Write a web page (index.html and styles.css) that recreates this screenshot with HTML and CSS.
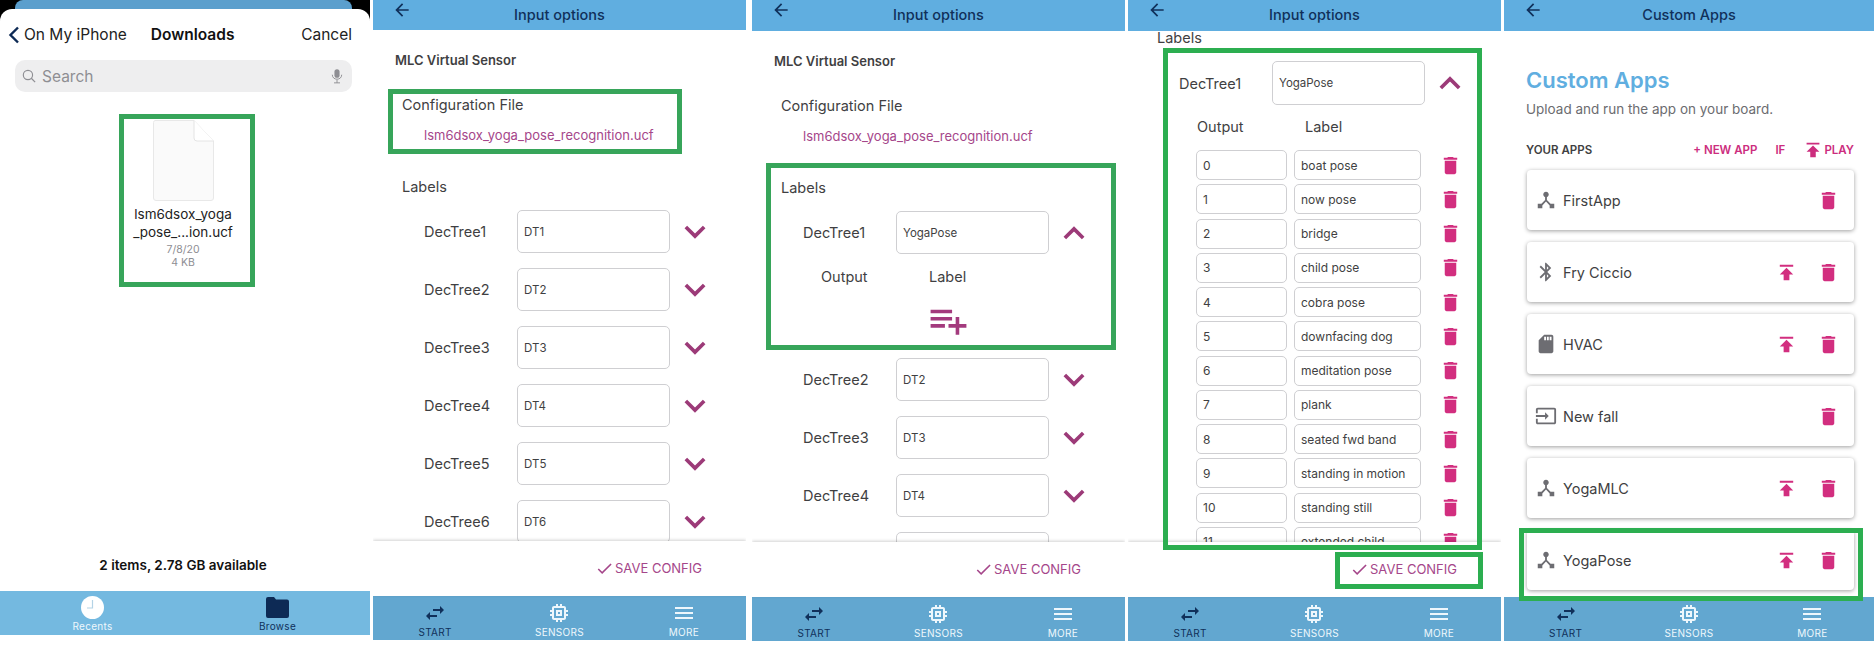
FILE: index.html
```html
<!DOCTYPE html>
<html lang="en">
<head>
  <meta charset="UTF-8" />
  <title>Custom Apps</title>
  <link rel="stylesheet" href="styles.css">
</head>
<body>
  <svg class="sprite" xmlns="http://www.w3.org/2000/svg">
    <symbol id="i-back" viewBox="0 0 24 24"><path d="M20 11H7.83l5.59-5.59L12 4l-8 8 8 8 1.41-1.41L7.83 13H20v-2z"/></symbol>
    <symbol id="i-down" viewBox="0 0 24 24"><path d="M2 6.5L12 16.5 22 6.5" fill="none" stroke="currentColor" stroke-width="4"/></symbol>
    <symbol id="i-up" viewBox="0 0 24 24"><path d="M2 17.5L12 7.5 22 17.5" fill="none" stroke="currentColor" stroke-width="4"/></symbol>
    <symbol id="i-trash" viewBox="0 0 24 24"><path d="M6 19c0 1.1.9 2 2 2h8c1.1 0 2-.9 2-2V7H6v12zM19 4h-3.5l-1-1h-5l-1 1H5v2h14V4z"/></symbol>
    <symbol id="i-publish" viewBox="0 0 24 24"><path d="M5 4v2h14V4H5zm0 10h4v6h6v-6h4l-7-7-7 7z"/></symbol>
    <symbol id="i-add" viewBox="0 0 24 24"><path d="M14 10H2v2h12v-2zm0-4H2v2h12V6zm4 8v-4h-2v4h-4v2h4v4h2v-4h4v-2h-4zM2 16h8v-2H2v2z"/></symbol>
    <symbol id="i-swap" viewBox="0 0 24 24"><path d="M6.99 11L3 15l3.99 4v-3H14v-2H6.99v-3zM21 9l-3.99-4v3H10v2h7.01v3L21 9z"/></symbol>
    <symbol id="i-chip" viewBox="0 0 24 24"><path d="M15 9H9v6h6V9zm-2 4h-2v-2h2v2zm8-2V9h-2V7c0-1.1-.9-2-2-2h-2V3h-2v2h-2V3H9v2H7c-1.1 0-2 .9-2 2v2H3v2h2v2H3v2h2v2c0 1.1.9 2 2 2h2v2h2v-2h2v2h2v-2h2c1.1 0 2-.9 2-2v-2h2v-2h-2v-2h2zm-4 6H7V7h10v10z"/></symbol>
    <symbol id="i-menu" viewBox="0 0 24 24"><path d="M3 18h18v-2H3v2zm0-5h18v-2H3v2zm0-7v2h18V6H3z"/></symbol>
    <symbol id="i-check" viewBox="0 0 24 24"><path d="M9 16.17L4.83 12l-1.42 1.41L9 19 21 7l-1.41-1.41z"/></symbol>
    <symbol id="i-bluetooth" viewBox="0 0 24 24"><path d="M17.71 7.71L12 2h-1v7.59L6.41 5 5 6.41 10.59 12 5 17.59 6.41 19 11 14.41V22h1l5.71-5.71-4.3-4.29 4.3-4.29zM13 5.83l1.88 1.88L13 9.59V5.83zm1.88 10.46L13 18.17v-3.76l1.88 1.88z"/></symbol>
    <symbol id="i-sd" viewBox="0 0 24 24"><path d="M18 2h-8L4.02 8 4 20c0 1.1.9 2 2 2h12c1.1 0 2-.9 2-2V4c0-1.1-.9-2-2-2zm-6 6h-2V4h2v4zm3 0h-2V4h2v4zm3 0h-2V4h2v4z"/></symbol>
    <symbol id="i-input" viewBox="0 0 24 24"><path d="M21 3.01H3c-1.1 0-2 .9-2 2V9h2V4.99h18v14.03H3V15H1v4.01c0 1.1.9 1.98 2 1.98h18c1.1 0 2-.88 2-1.98v-14c0-1.1-.9-2-2-2zM11 16l4-4-4-4v3H1v2h10v3z"/></symbol>
    <symbol id="i-hub" viewBox="0 0 24 24"><path d="M17 16l-4-4V8.82C14.16 8.4 15 7.3 15 6c0-1.66-1.34-3-3-3S9 4.34 9 6c0 1.3.84 2.4 2 2.82V12l-4 4H3v5h5v-3.05l4-4.2 4 4.2V21h5v-5h-4z"/></symbol>
  </svg>

  <div class="strip">

    <!-- file picker -->
    <section class="panel panel-files">
      <div class="notch"><div class="notch-blue"></div></div>
      <div class="sheet">
        <div class="picker-nav">
          <svg class="picker-chevron" viewBox="0 0 12 18"><path d="M10 1.5L2.5 9l7.5 7.5" fill="none" stroke="currentColor" stroke-width="2.4"/></svg>
          <span class="picker-back">On My iPhone</span>
          <span class="picker-title">Downloads</span>
          <span class="picker-cancel">Cancel</span>
        </div>
        <div class="search">
          <svg class="search-icon" viewBox="0 0 16 16"><circle cx="6.8" cy="6.8" r="5.3" fill="none" stroke="currentColor" stroke-width="1.3"/><path d="M10.6 10.6L15 15" stroke="currentColor" stroke-width="1.4"/></svg>
          <span class="search-text">Search</span>
          <svg class="search-mic" viewBox="0 0 14 18"><rect x="4" y="1" width="6" height="10" rx="3" fill="currentColor"/><path d="M1.5 7.5c0 7 11 7 11 0M7 13.5V17M3.5 17h7" fill="none" stroke="currentColor" stroke-width="1.1"/></svg>
        </div>
        <div class="file">
          <svg class="file-icon" viewBox="0 0 61 81"><path d="M2 .5h39L60.5 21v57a2.500 2.500 0 0 1-2.500 2.500H3A2.500 2.500 0 0 1 .5 78V2.500A2 2 0 0 1 2 .5z" fill="#fafafa" stroke="#e8e8e8"/><path d="M41 .5V18a3 3 0 0 0 3 3h16.500" fill="#fff" stroke="#e4e4e4"/></svg>
          <div class="file-name">lsm6dsox_yoga<br>_pose_...ion.ucf</div>
          <div class="file-meta">7/8/20<br>4 KB</div>
        </div>
      </div>
      <div class="status">2 items, 2.78 GB available</div>
      <nav class="tabs tabs-files">
        <div class="tab tab-white">
          <svg class="tab-clock" viewBox="0 0 23 23"><circle cx="11.500" cy="11.500" r="11.500" fill="#fff"/><path d="M11.500 4v8H6" fill="none" stroke="#b4d3e6" stroke-width="1.200"/></svg>
          <span>Recents</span>
        </div>
        <div class="tab tab-navy">
          <svg class="tab-folder" viewBox="0 0 23 21"><path d="M0 2a2 2 0 0 1 2-2h6l2 2.500h11a2 2 0 0 1 2 2V19a2 2 0 0 1-2 2H2a2 2 0 0 1-2-2z" fill="#0d2a55"/></svg>
          <span>Browse</span>
        </div>
      </nav>
      <div class="mark mark-file"></div>
    </section>

    <!-- input options, collapsed -->
    <section class="panel panel-input">
      <header class="top"><svg class="top-back"><use href="#i-back"/></svg><h2>Input options</h2></header>
      <div class="content">
        <div class="sensor">MLC Virtual Sensor</div>
        <div class="section-label cfg-label">Configuration File</div>
        <div class="cfg-file">lsm6dsox_yoga_pose_recognition.ucf</div>
        <div class="section-label labels-label">Labels</div>
        <div class="trees">
          <div class="tree"><span>DecTree1</span><div class="field">DT1</div><svg class="chev"><use href="#i-down"/></svg></div>
          <div class="tree"><span>DecTree2</span><div class="field">DT2</div><svg class="chev"><use href="#i-down"/></svg></div>
          <div class="tree"><span>DecTree3</span><div class="field">DT3</div><svg class="chev"><use href="#i-down"/></svg></div>
          <div class="tree"><span>DecTree4</span><div class="field">DT4</div><svg class="chev"><use href="#i-down"/></svg></div>
          <div class="tree"><span>DecTree5</span><div class="field">DT5</div><svg class="chev"><use href="#i-down"/></svg></div>
          <div class="tree"><span>DecTree6</span><div class="field">DT6</div><svg class="chev"><use href="#i-down"/></svg></div>
        </div>
      </div>
      <div class="save"><svg><use href="#i-check"/></svg>SAVE CONFIG</div>
      <nav class="tabs">
        <div class="tab tab-navy"><svg><use href="#i-swap"/></svg><span>START</span></div>
        <div class="tab tab-white"><svg><use href="#i-chip"/></svg><span>SENSORS</span></div>
        <div class="tab tab-white"><svg><use href="#i-menu"/></svg><span>MORE</span></div>
      </nav>
      <div class="mark mark-cfg"></div>
    </section>

    <!-- input options, first tree open and empty -->
    <section class="panel panel-input panel-low">
      <header class="top"><svg class="top-back"><use href="#i-back"/></svg><h2>Input options</h2></header>
      <div class="content">
        <div class="sensor">MLC Virtual Sensor</div>
        <div class="section-label cfg-label">Configuration File</div>
        <div class="cfg-file">lsm6dsox_yoga_pose_recognition.ucf</div>
        <div class="section-label labels-label">Labels</div>
        <div class="trees">
          <div class="tree"><span>DecTree1</span><div class="field">YogaPose</div><svg class="chev"><use href="#i-up"/></svg></div>
          <div class="detail">
            <div class="detail-head"><span>Output</span><span>Label</span></div>
            <svg class="detail-add"><use href="#i-add"/></svg>
          </div>
          <div class="tree"><span>DecTree2</span><div class="field">DT2</div><svg class="chev"><use href="#i-down"/></svg></div>
          <div class="tree"><span>DecTree3</span><div class="field">DT3</div><svg class="chev"><use href="#i-down"/></svg></div>
          <div class="tree"><span>DecTree4</span><div class="field">DT4</div><svg class="chev"><use href="#i-down"/></svg></div>
          <div class="tree"><span></span><div class="field"></div></div>
        </div>
      </div>
      <div class="save"><svg><use href="#i-check"/></svg>SAVE CONFIG</div>
      <nav class="tabs">
        <div class="tab tab-navy"><svg><use href="#i-swap"/></svg><span>START</span></div>
        <div class="tab tab-white"><svg><use href="#i-chip"/></svg><span>SENSORS</span></div>
        <div class="tab tab-white"><svg><use href="#i-menu"/></svg><span>MORE</span></div>
      </nav>
      <div class="mark mark-labels"></div>
    </section>

    <!-- input options, first tree filled in -->
    <section class="panel panel-input panel-low">
      <header class="top"><svg class="top-back"><use href="#i-back"/></svg><h2>Input options</h2></header>
      <div class="content">
        <div class="section-label scrolled-label">Labels</div>
        <div class="tree tree-open"><span>DecTree1</span><div class="field">YogaPose</div><svg class="chev"><use href="#i-up"/></svg></div>
        <div class="detail-head detail-head-filled"><span>Output</span><span>Label</span></div>
        <div class="outputs">
          <div class="output"><div class="field">0</div><div class="field">boat pose</div><svg class="bin"><use href="#i-trash"/></svg></div>
          <div class="output"><div class="field">1</div><div class="field">now pose</div><svg class="bin"><use href="#i-trash"/></svg></div>
          <div class="output"><div class="field">2</div><div class="field">bridge</div><svg class="bin"><use href="#i-trash"/></svg></div>
          <div class="output"><div class="field">3</div><div class="field">child pose</div><svg class="bin"><use href="#i-trash"/></svg></div>
          <div class="output"><div class="field">4</div><div class="field">cobra pose</div><svg class="bin"><use href="#i-trash"/></svg></div>
          <div class="output"><div class="field">5</div><div class="field">downfacing dog</div><svg class="bin"><use href="#i-trash"/></svg></div>
          <div class="output"><div class="field">6</div><div class="field">meditation pose</div><svg class="bin"><use href="#i-trash"/></svg></div>
          <div class="output"><div class="field">7</div><div class="field">plank</div><svg class="bin"><use href="#i-trash"/></svg></div>
          <div class="output"><div class="field">8</div><div class="field">seated fwd band</div><svg class="bin"><use href="#i-trash"/></svg></div>
          <div class="output"><div class="field">9</div><div class="field">standing in motion</div><svg class="bin"><use href="#i-trash"/></svg></div>
          <div class="output"><div class="field">10</div><div class="field">standing still</div><svg class="bin"><use href="#i-trash"/></svg></div>
          <div class="output"><div class="field">11</div><div class="field">extended child</div><svg class="bin"><use href="#i-trash"/></svg></div>
        </div>
      </div>
      <div class="save"><svg><use href="#i-check"/></svg>SAVE CONFIG</div>
      <nav class="tabs">
        <div class="tab tab-navy"><svg><use href="#i-swap"/></svg><span>START</span></div>
        <div class="tab tab-white"><svg><use href="#i-chip"/></svg><span>SENSORS</span></div>
        <div class="tab tab-white"><svg><use href="#i-menu"/></svg><span>MORE</span></div>
      </nav>
      <div class="mark mark-outputs"></div>
      <div class="mark mark-save"></div>
    </section>

    <!-- custom apps -->
    <section class="panel panel-apps panel-low">
      <header class="top"><svg class="top-back"><use href="#i-back"/></svg><h2>Custom Apps</h2></header>
      <div class="content">
        <h1 class="apps-title">Custom Apps</h1>
        <p class="apps-sub">Upload and run the app on your board.</p>
        <div class="apps-head">
          <span class="apps-your">YOUR APPS</span>
          <span class="apps-new">+ NEW APP</span>
          <span class="apps-if">IF</span>
          <span class="apps-play"><svg><use href="#i-publish"/></svg>PLAY</span>
        </div>
        <div class="cards">
          <div class="card"><svg class="card-icon"><use href="#i-hub"/></svg><span class="card-name">FirstApp</span><svg class="bin"><use href="#i-trash"/></svg></div>
          <div class="card"><svg class="card-icon"><use href="#i-bluetooth"/></svg><span class="card-name">Fry Ciccio</span><svg class="send"><use href="#i-publish"/></svg><svg class="bin"><use href="#i-trash"/></svg></div>
          <div class="card"><svg class="card-icon"><use href="#i-sd"/></svg><span class="card-name">HVAC</span><svg class="send"><use href="#i-publish"/></svg><svg class="bin"><use href="#i-trash"/></svg></div>
          <div class="card"><svg class="card-icon"><use href="#i-input"/></svg><span class="card-name">New fall</span><svg class="bin"><use href="#i-trash"/></svg></div>
          <div class="card"><svg class="card-icon"><use href="#i-hub"/></svg><span class="card-name">YogaMLC</span><svg class="send"><use href="#i-publish"/></svg><svg class="bin"><use href="#i-trash"/></svg></div>
          <div class="card"><svg class="card-icon"><use href="#i-hub"/></svg><span class="card-name">YogaPose</span><svg class="send"><use href="#i-publish"/></svg><svg class="bin"><use href="#i-trash"/></svg></div>
        </div>
      </div>
      <nav class="tabs">
        <div class="tab tab-navy"><svg><use href="#i-swap"/></svg><span>START</span></div>
        <div class="tab tab-white"><svg><use href="#i-chip"/></svg><span>SENSORS</span></div>
        <div class="tab tab-white"><svg><use href="#i-menu"/></svg><span>MORE</span></div>
      </nav>
      <div class="mark mark-app"></div>
    </section>

  </div>
</body>
</html>
```

FILE: styles.css
```css
* {
  box-sizing: border-box;
}

body {
  margin: 0;
  background-color: #fff;
  font-family: Inter, "Liberation Sans", sans-serif;
  color: #3f3f42;
  overflow: hidden;
}

.sprite {
  display: none;
}

.strip {
  display: flex;
  width: 1874px;
  height: 645px;
}

.panel {
  position: relative;
  display: flex;
  flex-direction: column;
  flex: none;
  width: 373px;
  height: 645px;
  padding-bottom: 5px;
  overflow: hidden;
}

.panel-low {
  padding-bottom: 4px;
}

.panel-low .top {
  height: 31px;
}

.panel-input + .panel-input {
  margin-left: 6px;
}

.panel-input + .panel-input + .panel-input {
  margin-left: 3px;
}

/* annotation frames */
.mark {
  position: absolute;
  border: 5px solid #37a55a;
  z-index: 5;
}

.mark-file { left: 119px; top: 114px; width: 136px; height: 173px; }
.mark-cfg { left: 15px; top: 89px; width: 294px; height: 65px; }
.mark-labels { left: 14px; top: 163px; width: 350px; height: 187px; }
.mark-outputs { left: 35px; top: 48px; width: 319px; height: 502px; border-color: #2cae50; }
.mark-save { left: 207px; top: 552px; width: 148px; height: 37px; border-color: #2cae50; }
.mark-app { left: 15px; top: 528px; width: 344px; height: 73px; border-color: #2cae50; }

/* file picker */
.panel-files {
  width: 370px;
  margin-right: 3px;
  padding-bottom: 10px;
}

.notch {
  height: 22px;
  background-color: #000;
  padding: 0 18px 0 15px;
  flex: none;
}

.notch-blue {
  height: 22px;
  background-color: #5b9fcd;
  border-radius: 8px 8px 0 0;
}

.sheet {
  flex: 1;
  margin-top: -13px;
  position: relative;
  background-color: #fff;
  border-radius: 12px 12px 0 0;
  display: flex;
  flex-direction: column;
}

.picker-nav {
  display: flex;
  align-items: center;
  height: 51px;
  padding: 0 18px 0 8px;
  font-size: 15.5px;
  color: #222;
}

.picker-chevron {
  width: 12px;
  height: 18px;
  color: #0d2a55;
  margin-right: 4px;
}

.picker-title {
  margin-left: 24px;
  font-weight: 600;
  color: #111;
}

.picker-cancel {
  margin-left: auto;
}

.search {
  display: flex;
  align-items: center;
  height: 32px;
  margin: 0 18px 0 15px;
  padding: 0 9px 0 7px;
  background-color: #eeeeef;
  border-radius: 10px;
  color: #8e8e93;
  font-size: 15.5px;
}

.search-icon {
  width: 14px;
  height: 14px;
  margin-right: 6px;
}

.search-mic {
  width: 12px;
  height: 16px;
  margin-left: auto;
}

.file {
  width: 366px;
  display: flex;
  flex-direction: column;
  align-items: center;
  padding-top: 28px;
}

.file-icon {
  width: 61px;
  height: 81px;
}

.file-name {
  margin-top: 4px;
  font-size: 13.5px;
  line-height: 18px;
  text-align: center;
  color: #222;
}

.file-meta {
  margin-top: 2px;
  font-size: 10.5px;
  line-height: 13px;
  text-align: center;
  color: #8e8e93;
}

.status {
  height: 52px;
  width: 366px;
  padding-top: 17px;
  flex: none;
  font-size: 13.5px;
  line-height: 18px;
  font-weight: 600;
  text-align: center;
  color: #111;
}

/* header */
.top {
  position: relative;
  display: flex;
  align-items: center;
  justify-content: center;
  height: 30px;
  flex: none;
  background-color: #60aee0;
  color: #10305a;
  z-index: 2;
}

.top h2 {
  margin: 0 0 2px;
  font-size: 14.5px;
  font-weight: 500;
}

.top-back {
  position: absolute;
  left: 19px;
  top: 0;
  width: 20px;
  height: 20px;
  fill: #10305a;
}

/* tab bar */
.tabs {
  display: grid;
  grid-template-columns: 1fr 1fr 1fr;
  height: 44px;
  flex: none;
  background-color: #62a7d0;
}

.tabs-files {
  grid-template-columns: 1fr 1fr;
  background-color: #74b9e0;
}

.tab {
  display: flex;
  flex-direction: column;
  align-items: center;
  padding-top: 5px;
  font-size: 10px;
  letter-spacing: 0.3px;
}

.tab svg {
  width: 24px;
  height: 24px;
  fill: currentColor;
}

.tab span {
  margin-top: 1px;
  line-height: 13px;
}

.tab-white {
  color: #eef7fc;
}

.tab-navy {
  color: #10305a;
}

.tab .tab-clock {
  width: 23px;
  height: 23px;
  margin-top: 0;
}

.tab .tab-folder {
  width: 23px;
  height: 21px;
  margin: 1px 0 1px;
}

/* input options */
.content {
  flex: 1;
  min-height: 0;
  overflow: hidden;
}

.sensor {
  height: 20px;
  margin: 20px 0 0 22px;
  font-size: 13px;
  line-height: 20px;
  font-weight: 600;
}

.section-label {
  height: 20px;
  margin-left: 29px;
  font-size: 14.5px;
  line-height: 20px;
}

.cfg-label {
  margin-top: 25px;
}

.cfg-file {
  height: 20px;
  margin: 10px 0 0 51px;
  font-size: 13px;
  line-height: 20px;
  color: #a5468a;
}

.labels-label {
  margin-top: 32px;
}

.scrolled-label {
  margin-top: -3px;
}

.trees {
  display: flex;
  flex-direction: column;
  gap: 15px;
  margin-top: 13px;
}

.tree {
  display: grid;
  grid-template-columns: 93px 153px 50px;
  align-items: center;
  height: 43px;
  flex: none;
  padding-left: 51px;
  font-size: 14.5px;
}

.tree-open {
  height: 44px;
  margin-top: 13px;
}

.field {
  display: flex;
  align-items: center;
  height: 100%;
  padding-left: 6px;
  border: 1px solid #cfcfd2;
  border-radius: 5px;
  background-color: #fff;
  font-size: 11.5px;
}

.chev {
  justify-self: center;
  width: 22px;
  height: 22px;
  color: #9c3a78;
}

.detail {
  height: 74px;
  flex: none;
}

.detail-head {
  display: grid;
  grid-template-columns: 108px 100px;
  height: 16px;
  padding-left: 69px;
  font-size: 14.5px;
  line-height: 16px;
}

.detail-head-filled {
  margin-top: 14px;
  grid-template-columns: 108px 100px;
}

.detail-add {
  display: block;
  width: 43px;
  height: 43px;
  margin: 14px 0 0 175px;
  fill: #a33a7d;
}

.outputs {
  display: flex;
  flex-direction: column;
  gap: 4.25px;
  margin-top: 15px;
}

.output {
  display: grid;
  grid-template-columns: 91px 127px 44px;
  column-gap: 7px;
  align-items: center;
  height: 30px;
  flex: none;
  padding-left: 68px;
}

.output .field {
  padding-left: 6px;
  font-size: 12px;
}

.bin {
  justify-self: center;
  width: 23px;
  height: 23px;
  fill: #d22e7f;
}

.save {
  position: relative;
  display: flex;
  align-items: center;
  justify-content: flex-end;
  height: 55px;
  flex: none;
  padding: 0 44px 1px 0;
  background-color: #fff;
  box-shadow: 0 -1px 3px rgba(0, 0, 0, 0.18);
  font-size: 13px;
  color: #a5468a;
}

.save svg {
  width: 19px;
  height: 19px;
  margin-right: 1px;
  fill: #a5468a;
}

/* custom apps */
.panel-apps {
  width: 370px;
  margin-left: 3px;
}

.apps-title {
  margin: 33px 0 0 22px;
  font-size: 22px;
  line-height: 32px;
  font-weight: 600;
  color: #60aee0;
}

.apps-sub {
  margin: 4px 0 0 22px;
  font-size: 13.5px;
  line-height: 18px;
  color: #6c6c70;
}

.apps-head {
  display: flex;
  align-items: center;
  height: 18px;
  margin: 23px 20px 0 22px;
  font-size: 11.5px;
  font-weight: 600;
  color: #cc2d7e;
}

.apps-your {
  color: #3f3f42;
  margin-right: auto;
}

.apps-if {
  margin: 0 0 0 18px;
}

.apps-play {
  display: flex;
  align-items: center;
  margin-left: 17px;
}

.apps-play svg {
  width: 22px;
  height: 22px;
  margin-right: 0;
  fill: #cc2d7e;
}

.cards {
  display: flex;
  flex-direction: column;
  gap: 12px;
  margin: 11px 20px 0 23px;
}

.card {
  display: flex;
  align-items: center;
  height: 60px;
  padding: 0 14px 0 8px;
  background-color: #fff;
  border-radius: 4px;
  box-shadow: 0 1px 4px rgba(0, 0, 0, 0.38);
}

.card-icon {
  width: 22px;
  height: 22px;
  fill: #6d6d72;
}

.card-name {
  flex: 1;
  margin-left: 6px;
  font-size: 14.5px;
}

.send {
  width: 23px;
  height: 23px;
  margin-right: 19px;
  fill: #d22e7f;
}
```
